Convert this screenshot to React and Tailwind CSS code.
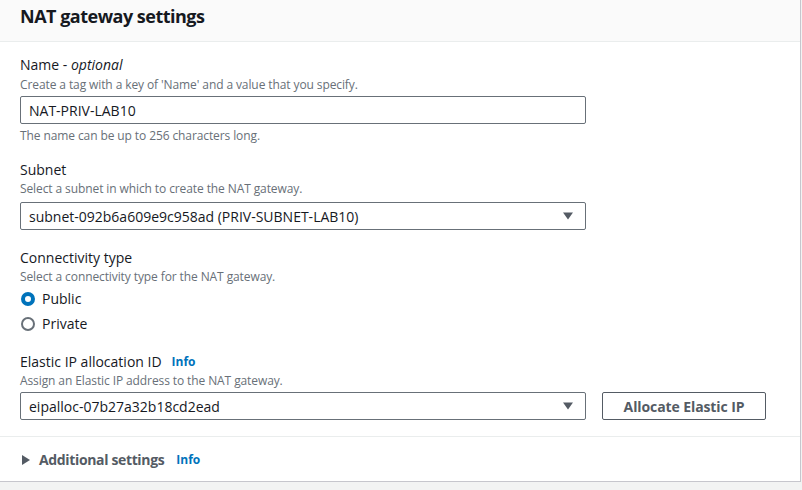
import { useState } from "react";

const ff = { fontFamily: '"Open Sans", "Noto Sans", Arial, sans-serif' };

function Caret() {
  return (
    <svg width="12" height="8" viewBox="0 0 12 8" className="shrink-0">
      <path d="M1 0.5h10L6 7.5z" fill="#545b64" />
    </svg>
  );
}

function Radio({ checked, label, onClick }) {
  return (
    <div className="flex items-center h-[25px] cursor-pointer" onClick={onClick}>
      {checked ? (
        <span className="w-[14px] h-[14px] rounded-full border-[4px] border-[#0073bb] bg-white ml-[1px]" />
      ) : (
        <span className="w-[14px] h-[14px] rounded-full border-2 border-[#687078] bg-white ml-[1px]" />
      )}
      <span className="ml-[7px] text-[14px] text-[#16191f]">{label}</span>
    </div>
  );
}

export default function App() {
  const [tipo, setTipo] = useState("public");

  return (
    <div className="w-[802px] h-[490px] bg-[#f2f3f3] overflow-hidden" style={ff}>
      <div className="w-[801px] h-[482px] bg-white border-r border-b border-[#c6c6cd]">
        {/* cabecalho */}
        <div className="h-[42px] bg-[#fafafa] border-b border-[#eaeded] px-5 flex items-center">
          <h2 className="text-[18px] font-bold text-[#16191f] -mt-[8px] tracking-[-0.5px]">NAT gateway settings</h2>
        </div>

        <div className="px-5 pt-[13px] pb-4 border-b border-[#eaeded]">
          {/* Name */}
          <div className="text-[14px] leading-5 text-[#16191f]">
            Name - <i>optional</i>
          </div>
          <div className="text-[12px] leading-4 text-[#687078] mt-[2px] tracking-[-0.1px]">
            Create a tag with a key of 'Name' and a value that you specify.
          </div>
          <input
            defaultValue="NAT-PRIV-LAB10"
            className="mt-[3px] w-[566px] h-[28px] border border-[#687078] rounded-[2px] px-[8px] text-[14px] text-[#16191f] outline-none"
            style={ff}
          />
          <div className="text-[12px] leading-4 text-[#687078] mt-[4px] tracking-[-0.1px]">
            The name can be up to 256 characters long.
          </div>

          {/* Subnet */}
          <div className="text-[14px] leading-5 text-[#16191f] mt-[16px]">Subnet</div>
          <div className="text-[12px] leading-4 text-[#687078] mt-[1px] tracking-[-0.1px]">
            Select a subnet in which to create the NAT gateway.
          </div>
          <div className="mt-[5px] w-[566px] h-[28px] border border-[#687078] rounded-[2px] pl-[8px] pr-[11px] flex items-center justify-between">
            <span className="text-[14px] text-[#16191f]">subnet-092b6a609e9c958ad (PRIV-SUBNET-LAB10)</span>
            <Caret />
          </div>

          {/* Connectivity */}
          <div className="text-[14px] leading-5 text-[#16191f] mt-[18px]">Connectivity type</div>
          <div className="text-[12px] leading-4 text-[#687078] mt-[1px] tracking-[-0.1px]">
            Select a connectivity type for the NAT gateway.
          </div>
          <div className="mt-[1px] flex flex-col">
            <Radio checked={tipo === "public"} label="Public" onClick={() => setTipo("public")} />
            <Radio checked={tipo === "private"} label="Private" onClick={() => setTipo("private")} />
          </div>

          {/* Elastic IP */}
          <div className="flex items-center mt-[16px]">
            <span className="text-[14px] leading-5 text-[#16191f]">Elastic IP allocation ID</span>
            <span className="ml-[10px] text-[12px] font-bold text-[#0073bb]">Info</span>
          </div>
          <div className="text-[12px] leading-4 text-[#687078] mt-[1px] tracking-[-0.1px]">
            Assign an Elastic IP address to the NAT gateway.
          </div>
          <div className="mt-[3px] flex items-center gap-[16px]">
            <div className="w-[566px] h-[28px] border border-[#687078] rounded-[2px] pl-[8px] pr-[11px] flex items-center justify-between">
              <span className="text-[14px] text-[#16191f]">eipalloc-07b27a32b18cd2ead</span>
              <Caret />
            </div>
            <button className="w-[164px] h-[28px] border border-[#545b64] rounded-[2px] text-[14px] font-bold text-[#545b64] bg-white tracking-[-0.1px]">
              Allocate Elastic IP
            </button>
          </div>
        </div>

        {/* Additional settings */}
        <div className="h-[45px] px-5 flex items-center">
          <svg width="10" height="12" viewBox="0 0 10 12" className="ml-[1px]">
            <path d="M1 1v10l8-5z" fill="#545b64" />
          </svg>
          <span className="ml-[8px] text-[14px] font-bold text-[#545b64] tracking-[-0.35px]">Additional settings</span>
          <span className="ml-[12px] text-[12px] font-bold text-[#0073bb]">Info</span>
        </div>
      </div>
    </div>
  );
}
